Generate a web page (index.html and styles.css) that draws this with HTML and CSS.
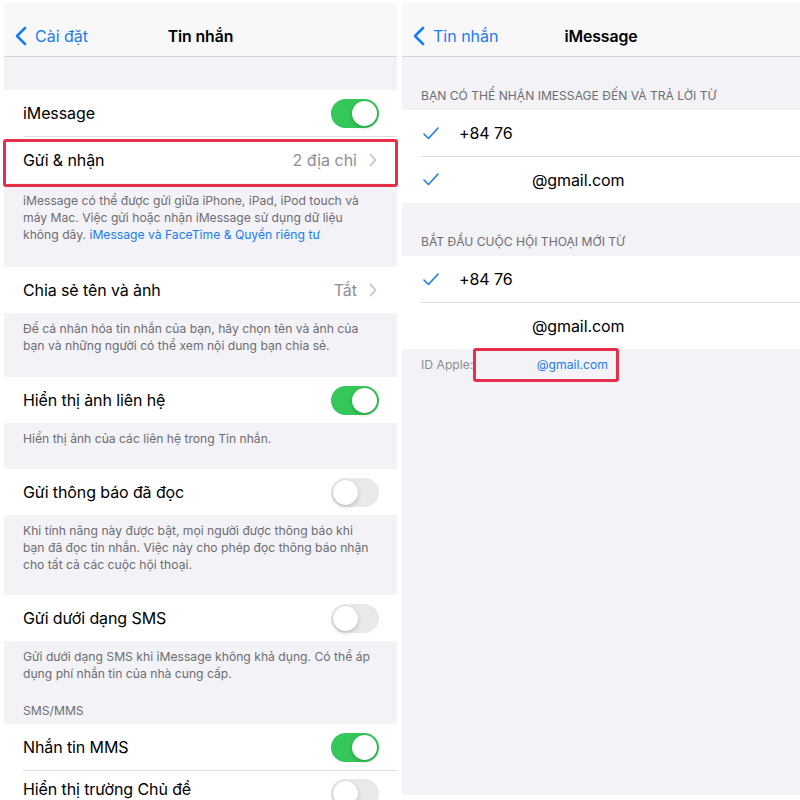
FILE: index.html
```html
<!DOCTYPE html>
<html lang="vi">
<head>
<meta charset="utf-8">
<title>Tin nhắn / iMessage</title>
<link rel="stylesheet" href="styles.css">
</head>
<body>
<div class="screen">
  <section class="panel left">
    <header class="nav">
      <a class="back"><svg class="back-icon" viewBox="0 0 12 20" width="12" height="20"><polyline points="10,2 2,10 10,18" /></svg>Cài đặt</a>
      <h1 class="title">Tin nhắn</h1>
      <span></span>
    </header>
    <div class="gap-top"></div>
    <div class="group">
      <div class="row"><span class="label">iMessage</span><span class="toggle on"></span></div>
      <div class="row"><span class="label">Gửi &amp; nhận</span><span class="value">2 địa chỉ</span><svg class="chev" viewBox="0 0 8 14" width="8" height="14"><polyline points="1.5,1.5 6.5,7 1.5,12.5" /></svg></div>
    </div>
    <p class="footer first">iMessage có thể được gửi giữa iPhone, iPad, iPod touch và<br>máy Mac. Việc gửi hoặc nhận iMessage sử dụng dữ liệu<br>không dây. <span class="link">iMessage và FaceTime &amp; Quyền riêng tư</span></p>
    <div class="group">
      <div class="row"><span class="label">Chia sẻ tên và ảnh</span><span class="value">Tắt</span><svg class="chev" viewBox="0 0 8 14" width="8" height="14"><polyline points="1.5,1.5 6.5,7 1.5,12.5" /></svg></div>
    </div>
    <p class="footer">Để cá nhân hóa tin nhắn của bạn, hãy chọn tên và ảnh của<br>bạn và những người có thể xem nội dung bạn chia sẻ.</p>
    <div class="group">
      <div class="row"><span class="label">Hiển thị ảnh liên hệ</span><span class="toggle on"></span></div>
    </div>
    <p class="footer short">Hiển thị ảnh của các liên hệ trong Tin nhắn.</p>
    <div class="group">
      <div class="row"><span class="label">Gửi thông báo đã đọc</span><span class="toggle"></span></div>
    </div>
    <p class="footer short">Khi tính năng này được bật, mọi người được thông báo khi<br>bạn đã đọc tin nhắn. Việc này cho phép đọc thông báo nhận<br>cho tất cả các cuộc hội thoại.</p>
    <div class="group">
      <div class="row"><span class="label">Gửi dưới dạng SMS</span><span class="toggle"></span></div>
    </div>
    <p class="footer tight">Gửi dưới dạng SMS khi iMessage không khả dụng. Có thể áp<br>dụng phí nhắn tin của nhà cung cấp.</p>
    <h2 class="section-small">SMS/MMS</h2>
    <div class="group">
      <div class="row"><span class="label">Nhắn tin MMS</span><span class="toggle on"></span></div>
      <div class="row last"><span class="label">Hiển thị trường Chủ đề</span><span class="toggle"></span></div>
    </div>
  </section>

  <section class="panel right">
    <header class="nav">
      <a class="back"><svg class="back-icon" viewBox="0 0 12 20" width="12" height="20"><polyline points="10,2 2,10 10,18" /></svg>Tin nhắn</a>
      <h1 class="title">iMessage</h1>
      <span></span>
    </header>
    <h2 class="section">Bạn có thể nhận iMessage đến và trả lời từ</h2>
    <div class="group">
      <div class="row check-row"><svg class="check" viewBox="0 0 16 13" width="16" height="13"><polyline points="1,7 5.5,11.5 15,1" /></svg><span class="label">+84 76</span></div>
      <div class="row check-row"><svg class="check" viewBox="0 0 16 13" width="16" height="13"><polyline points="1,7 5.5,11.5 15,1" /></svg><span class="label email">@gmail.com</span></div>
    </div>
    <h2 class="section">Bắt đầu cuộc hội thoại mới từ</h2>
    <div class="group">
      <div class="row check-row"><svg class="check" viewBox="0 0 16 13" width="16" height="13"><polyline points="1,7 5.5,11.5 15,1" /></svg><span class="label">+84 76</span></div>
      <div class="row check-row"><span class="check-space"></span><span class="label email">@gmail.com</span></div>
    </div>
    <p class="apple-id">ID Apple: <span class="link apple-mail">@gmail.com</span></p>
  </section>

  <div class="highlight hl-left"></div>
  <div class="highlight hl-right"></div>
</div>
</body>
</html>
```

FILE: styles.css
```css
html, body {
  margin: 0;
  padding: 0;
  background: #ffffff;
}

body {
  font-family: Inter, "Liberation Sans", Arial, sans-serif;
  color: #000;
  width: 800px;
  height: 800px;
  overflow: hidden;
}

.screen {
  position: relative;
  display: flex;
  gap: 5px;
  padding: 3px 0 0 4px;
  width: 800px;
  height: 800px;
  box-sizing: border-box;
}

.panel {
  background: #f2f2f7;
  display: flex;
  flex-direction: column;
  overflow: hidden;
}

.panel.left {
  width: 393px;
  height: 797px;
}

.panel.right {
  width: 398px;
  height: 792px;
}

.nav {
  height: 53px;
  flex: none;
  background: #f8f8f9;
  border-bottom: 1px solid #d6d6da;
  display: grid;
  grid-template-columns: 1fr auto 1fr;
  align-items: end;
}

.back {
  display: flex;
  align-items: center;
  gap: 8px;
  color: #1a7cf5;
  font-size: 16px;
  line-height: 20px;
  padding-left: 11px;
  margin-bottom: 10px;
  white-space: nowrap;
}

.back-icon {
  fill: none;
  stroke: #1a7cf5;
  stroke-width: 2.6;
  stroke-linecap: round;
  stroke-linejoin: round;
}

.title {
  margin: 0 0 9px;
  font-size: 15.8px;
  line-height: 20px;
  font-weight: 600;
  letter-spacing: -0.1px;
}

.gap-top {
  height: 33px;
  flex: none;
}

.group {
  background: #ffffff;
  flex: none;
}

.row {
  height: 46px;
  display: flex;
  align-items: center;
  padding: 0 18px 0 19px;
  position: relative;
}

.row + .row::before {
  content: "";
  position: absolute;
  top: 0;
  left: 19px;
  right: 0;
  height: 1px;
  background: #dcdce0;
}

.row + .row {
  height: 47px;
}

.row.last {
  align-items: flex-start;
  padding-top: 9px;
  box-sizing: border-box;
}

.label {
  font-size: 16px;
  flex: 1;
  white-space: nowrap;
  letter-spacing: -0.1px;
}

.value {
  font-size: 16px;
  color: #8e8e93;
  margin-right: 12px;
}

.chev {
  fill: none;
  stroke: #c4c4c8;
  stroke-width: 1.8;
  stroke-linecap: round;
  stroke-linejoin: round;
  margin-right: 2px;
}

.toggle {
  width: 48px;
  height: 29px;
  border-radius: 15px;
  background: #e9e9eb;
  position: relative;
  flex: none;
}

.toggle::after {
  content: "";
  position: absolute;
  top: 2px;
  left: 2px;
  width: 25px;
  height: 25px;
  border-radius: 50%;
  background: #fff;
  box-shadow: 0 2px 4px rgba(0,0,0,0.18), 0 0 1px rgba(0,0,0,0.15);
}

.toggle.on {
  background: #34c759;
}

.toggle.on::after {
  left: 21px;
}

.footer {
  margin: 0;
  padding: 7px 10px 23px 19px;
  font-size: 12.15px;
  line-height: 17px;
  color: #6d6d72;
  white-space: nowrap;
  flex: none;
}

.footer.first {
  padding-top: 9px;
  padding-bottom: 24px;
}

.footer.short {
  padding-bottom: 22px;
}

.footer.tight {
  padding-bottom: 20px;
}

.link {
  color: #1a7cf5;
}

.section-small {
  margin: 0;
  padding: 0 19px 5px;
  font-size: 12.15px;
  line-height: 17px;
  font-weight: 400;
  color: #6d6d72;
}

.section {
  margin: 0;
  padding: 31px 19px 6px;
  font-size: 12.1px;
  line-height: 16px;
  font-weight: 400;
  text-transform: uppercase;
  color: #6d6d72;
  white-space: nowrap;
  flex: none;
}

.check-row {
  padding-left: 21px;
}

.check {
  fill: none;
  stroke: #1a7cf5;
  stroke-width: 1.6;
  stroke-linecap: round;
  stroke-linejoin: round;
  width: 16px;
  margin-right: 20px;
  flex: none;
}

.check-space {
  width: 36px;
  flex: none;
}

.email {
  padding-left: 73px;
}

.apple-id {
  margin: 0;
  padding: 8px 19px;
  font-size: 12.2px;
  line-height: 16px;
  color: #8e8e93;
  white-space: nowrap;
}

.apple-mail {
  margin-left: 60px;
}

.highlight {
  position: absolute;
  border: 3px solid #e5304b;
  border-radius: 3px;
  box-sizing: border-box;
  pointer-events: none;
}

.hl-left {
  left: 3px;
  top: 139px;
  width: 395px;
  height: 48px;
}

.hl-right {
  left: 473px;
  top: 348px;
  width: 146px;
  height: 34px;
}
```
